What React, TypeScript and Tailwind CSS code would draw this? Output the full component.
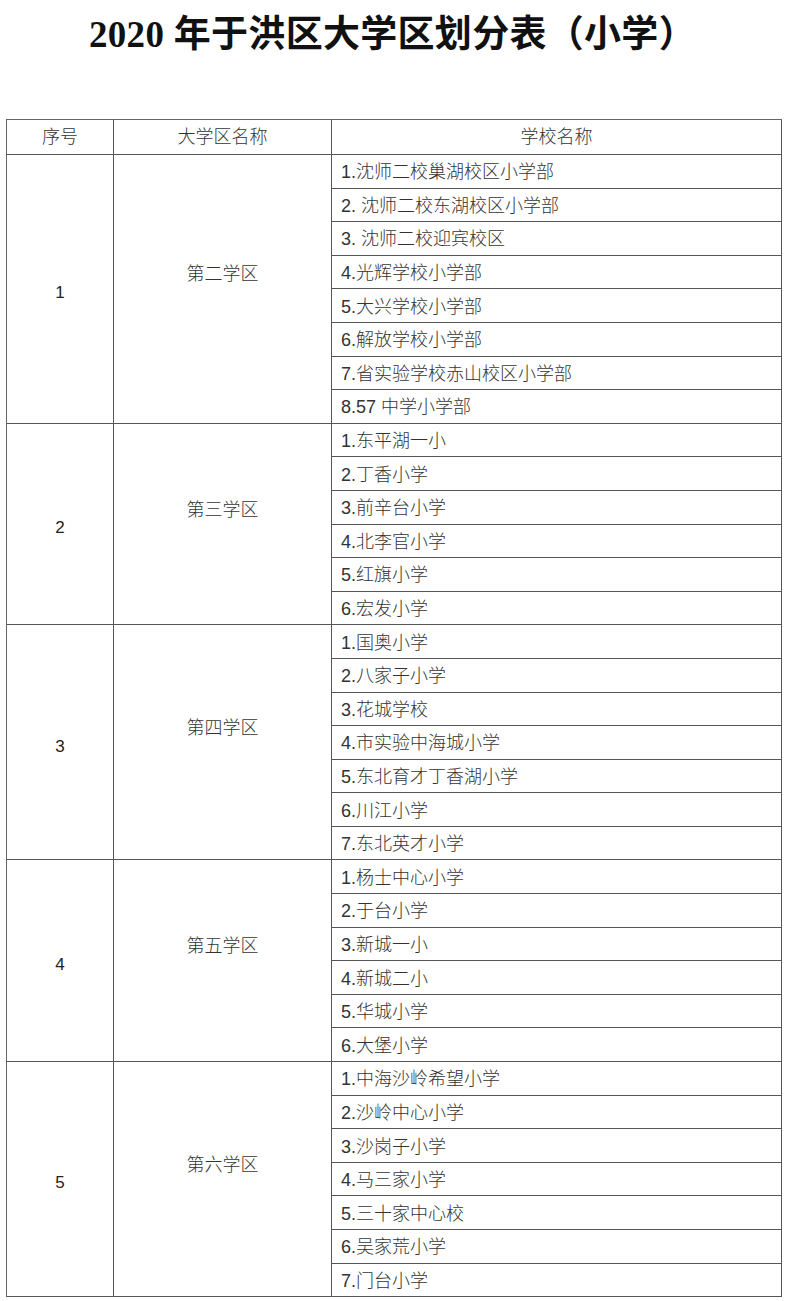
import React from "react";

const groups: { no: string; name: string; schools: string[] }[] = [
  {
    no: "1",
    name: "第二学区",
    schools: [
      "1.沈师二校巢湖校区小学部",
      "2. 沈师二校东湖校区小学部",
      "3. 沈师二校迎宾校区",
      "4.光辉学校小学部",
      "5.大兴学校小学部",
      "6.解放学校小学部",
      "7.省实验学校赤山校区小学部",
      "8.57 中学小学部",
    ],
  },
  {
    no: "2",
    name: "第三学区",
    schools: ["1.东平湖一小", "2.丁香小学", "3.前辛台小学", "4.北李官小学", "5.红旗小学", "6.宏发小学"],
  },
  {
    no: "3",
    name: "第四学区",
    schools: [
      "1.国奥小学",
      "2.八家子小学",
      "3.花城学校",
      "4.市实验中海城小学",
      "5.东北育才丁香湖小学",
      "6.川江小学",
      "7.东北英才小学",
    ],
  },
  {
    no: "4",
    name: "第五学区",
    schools: ["1.杨士中心小学", "2.于台小学", "3.新城一小", "4.新城二小", "5.华城小学", "6.大堡小学"],
  },
  {
    no: "5",
    name: "第六学区",
    schools: [
      "1.中海沙岭希望小学",
      "2.沙岭中心小学",
      "3.沙岗子小学",
      "4.马三家小学",
      "5.三十家中心校",
      "6.吴家荒小学",
      "7.门台小学",
    ],
  },
];

const cellFont = {
  fontFamily: '"Liberation Sans", "Noto Sans CJK SC", sans-serif',
};

export default function App() {
  return (
    <div className="w-[785px] h-[1301px] bg-white overflow-hidden" style={cellFont}>
      <div className="h-[119px] pt-[13px] flex justify-center">
        <div
          className="text-[37px] leading-[44px] font-bold text-[#111] tracking-[0.3px]"
          style={{ fontFamily: '"Liberation Serif", "Noto Sans CJK SC", serif' }}
        >
          2020 年于洪区大学区划分表（小学）
        </div>
      </div>
      <div className="ml-[6px] w-[776px] border-t border-l border-[#666] text-[#333] text-[18px] font-light">
        <div className="flex h-[35px]">
          <div className="w-[107px] border-r border-b border-[#555] flex items-center justify-center">序号</div>
          <div className="w-[218px] border-r border-b border-[#555] flex items-center justify-center">大学区名称</div>
          <div className="flex-1 border-r border-b border-[#555] flex items-center justify-center">学校名称</div>
        </div>
        {groups.map((g) => (
          <div key={g.no} className="flex">
            <div className="w-[107px] border-r border-b border-[#555] flex items-center justify-center pt-[8px] text-[17px] text-[#222]">
              {g.no}
            </div>
            <div className="w-[218px] border-r border-b border-[#555] flex items-center justify-center pb-[28px]">
              {g.name}
            </div>
            <div className="flex-1 flex flex-col">
              {g.schools.map((s) => (
                <div
                  key={s}
                  className="h-[33.6px] border-r border-b border-[#555] flex items-center pl-[9px] pt-[3px]"
                >
                  {s}
                </div>
              ))}
            </div>
          </div>
        ))}
      </div>
    </div>
  );
}
